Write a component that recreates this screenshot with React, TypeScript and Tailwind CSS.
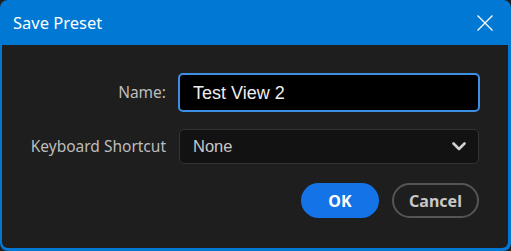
export default function App() {
  return (
    <div className="w-[511px] h-[251px] bg-[#1f1f1f]">
      <div className="flex flex-col h-full rounded-[8px] bg-[#0078d4] overflow-hidden font-['Noto_Sans',sans-serif]">
        {/* title bar */}
        <div className="h-[45px] shrink-0 flex items-center justify-between pl-[13px] pr-[18px]">
          <span className="text-[16.5px] text-white leading-none pt-[1px]">Save Preset</span>
          <svg width="16" height="16" viewBox="0 0 16 16" fill="none" className="mt-[1px]">
            <path d="M0.5 0.5 L15.5 15.5 M15.5 0.5 L0.5 15.5" stroke="white" strokeWidth="1.3" />
          </svg>
        </div>

        {/* body */}
        <div className="flex-1 ml-[2px] mr-[3px] mb-[3px] bg-[#1e1e1e] rounded-b-[6px] pt-[28px] pr-[28px]">
          <div className="grid grid-cols-[164px_1fr] gap-x-[12px] items-center">
            <label className="text-right text-[15.5px] text-[#bdbdbd] leading-none">Name:</label>
            <div className="h-[39px] flex items-center rounded-[5px] border-2 border-[#3d8fe3] bg-black pl-[13px]">
              <span className="text-[18px] text-[#eeeeee] font-['Liberation_Sans',Arial,sans-serif] leading-none">Test View 2</span>
            </div>

            <label className="text-right text-[15.5px] text-[#bdbdbd] leading-none mt-[17px]">Keyboard Shortcut</label>
            <div className="mt-[17px] mx-[1px] h-[35px] flex items-center justify-between rounded-[5px] border border-[#333333] bg-[#121212] pl-[13px] pr-[12px]">
              <span className="text-[16.5px] text-[#c8c8c8] font-['Liberation_Sans',Arial,sans-serif] leading-none">None</span>
              <svg width="14" height="9" viewBox="0 0 14 9" fill="none">
                <path d="M1.5 1.5 L7 7 L12.5 1.5" stroke="#d0d0d0" strokeWidth="2.6" strokeLinecap="round" strokeLinejoin="round" />
              </svg>
            </div>
          </div>

          <div className="flex justify-end gap-[13px] mt-[19px] pr-[1px]">
            <button className="w-[78px] h-[35px] rounded-full bg-[#1473e6] text-white text-[16px] font-bold leading-none">
              OK
            </button>
            <button className="w-[87px] h-[35px] rounded-full border-2 border-[#555555] text-[#c8c8c8] text-[16px] font-bold leading-none">
              Cancel
            </button>
          </div>
        </div>
      </div>
    </div>
  );
}
